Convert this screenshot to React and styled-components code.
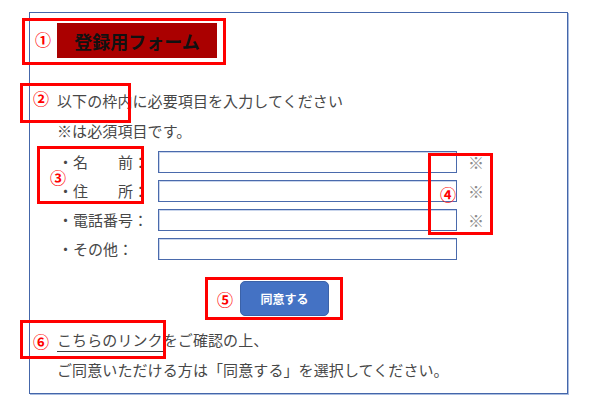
import React from 'react';
import styled, { createGlobalStyle } from 'styled-components';

const GlobalStyle = createGlobalStyle`
  html, body {
    margin: 0;
    padding: 0;
    background: #ffffff;
  }
  body {
    font-family: "Noto Sans CJK JP", "Noto Sans", sans-serif;
    color: #404040;
  }
`;

const fields = [
  { label: '・名　　前：', required: true },
  { label: '・住　　所：', required: true },
  { label: '・電話番号：', required: true },
  { label: '・その他：', required: false },
];

const notes = [
  { n: '①', box: { left: 22, top: 18, width: 204, height: 47 }, mark: { left: 10, top: 18 } },
  { n: '②', box: { left: 20, top: 83, width: 111, height: 40 }, mark: { left: 10, top: 12 } },
  { n: '③', box: { left: 37, top: 146, width: 107, height: 58 }, mark: { left: 10, top: 28 } },
  { n: '④', box: { left: 428, top: 153, width: 65, height: 82 }, mark: { left: 9, top: 38 } },
  { n: '⑤', box: { left: 205, top: 277, width: 138, height: 43 }, mark: { left: 9, top: 19 } },
  { n: '⑥', box: { left: 20, top: 320, width: 146, height: 39 }, mark: { left: 10, top: 18 } },
];

const App = () => {
  return (
    <Page>
      <GlobalStyle />
      <Frame>
        <TitleBlock>登録用フォーム</TitleBlock>

        <Intro>
          <Line>以下の枠内に必要項目を入力してください</Line>
          <Line>※は必須項目です。</Line>
        </Intro>

        <FormGrid>
          {fields.map((f) => (
            <React.Fragment key={f.label}>
              <Label>{f.label}</Label>
              <Field type="text" />
              <Required>{f.required ? '※' : ''}</Required>
            </React.Fragment>
          ))}
        </FormGrid>

        <ButtonRow>
          <AgreeButton type="button">同意する</AgreeButton>
        </ButtonRow>

        <Outro>
          <Line>
            <Link href="#">こちらのリンク</Link>をご確認の上、
          </Line>
          <Line>ご同意いただける方は「同意する」を選択してください。</Line>
        </Outro>
      </Frame>

      {notes.map((a) => (
        <NoteBox key={a.n} style={a.box}>
          <NoteMark style={a.mark}>{a.n}</NoteMark>
        </NoteBox>
      ))}
    </Page>
  );
};

export default App;

const Page = styled.div`
  position: relative;
  width: 592px;
  height: 407px;
  padding: 12px 0 0 29px;
  box-sizing: border-box;
`;

const Frame = styled.div`
  width: 539px;
  height: 382px;
  box-sizing: border-box;
  border: 1px solid #4466aa;
  box-shadow: 1px 1px 0 0 #a9bde0;
  padding: 10px 0 0 27px;
  display: flex;
  flex-direction: column;
  align-items: flex-start;
`;

const TitleBlock = styled.div`
  width: 160px;
  height: 35px;
  background: #aa0000;
  color: #111111;
  font-size: 18px;
  font-weight: 700;
  display: flex;
  align-items: center;
  justify-content: center;
  margin-bottom: 28px;
`;

const Intro = styled.div`
  display: flex;
  flex-direction: column;
  margin-bottom: 5px;
`;

const Outro = styled.div`
  display: flex;
  flex-direction: column;
  margin-top: 9px;
`;

const Line = styled.div`
  font-size: 15px;
  line-height: 30px;
  letter-spacing: 0.1px;
  white-space: nowrap;
  color: #474747;
`;

const Link = styled.a`
  color: #474747;
  text-decoration: none;
  border-bottom: 1.5px solid #404040;
  padding-bottom: 1px;
`;

const FormGrid = styled.div`
  display: grid;
  grid-template-columns: 100px 299px 26px;
  grid-auto-rows: 22px;
  row-gap: 7px;
  align-items: center;
  margin-left: 1px;
`;

const Label = styled.span`
  font-size: 15px;
  line-height: 22px;
  white-space: nowrap;
  color: #474747;
`;

const Field = styled.input`
  width: 299px;
  height: 22px;
  box-sizing: border-box;
  border: 1.5px solid #4a6aac;
  box-shadow: inset 1px 1px 0 #c9d5ec;
  background: #ffffff;
  margin: 0;
  padding: 0 4px;
  outline: none;
`;

const Required = styled.span`
  font-size: 16px;
  line-height: 22px;
  color: #8a8a8a;
  padding-left: 11px;
`;

const ButtonRow = styled.div`
  display: flex;
  margin: 21px 0 0 183px;
`;

const AgreeButton = styled.button`
  width: 89px;
  height: 35px;
  background: #4472c4;
  border: 1px solid #3b62a8;
  border-radius: 5px;
  color: #ffffff;
  font-family: "Noto Sans CJK JP", sans-serif;
  font-size: 12px;
  font-weight: 700;
  padding: 0;
  cursor: pointer;
`;

const NoteBox = styled.div`
  position: absolute;
  box-sizing: border-box;
  border: 3px solid #ff0000;
  pointer-events: none;
`;

const NoteMark = styled.span`
  position: absolute;
  transform: translateY(-50%);
  font-size: 16px;
  font-weight: 700;
  line-height: 1;
  color: #ff0000;
  font-family: "Noto Sans CJK JP", sans-serif;
`;
